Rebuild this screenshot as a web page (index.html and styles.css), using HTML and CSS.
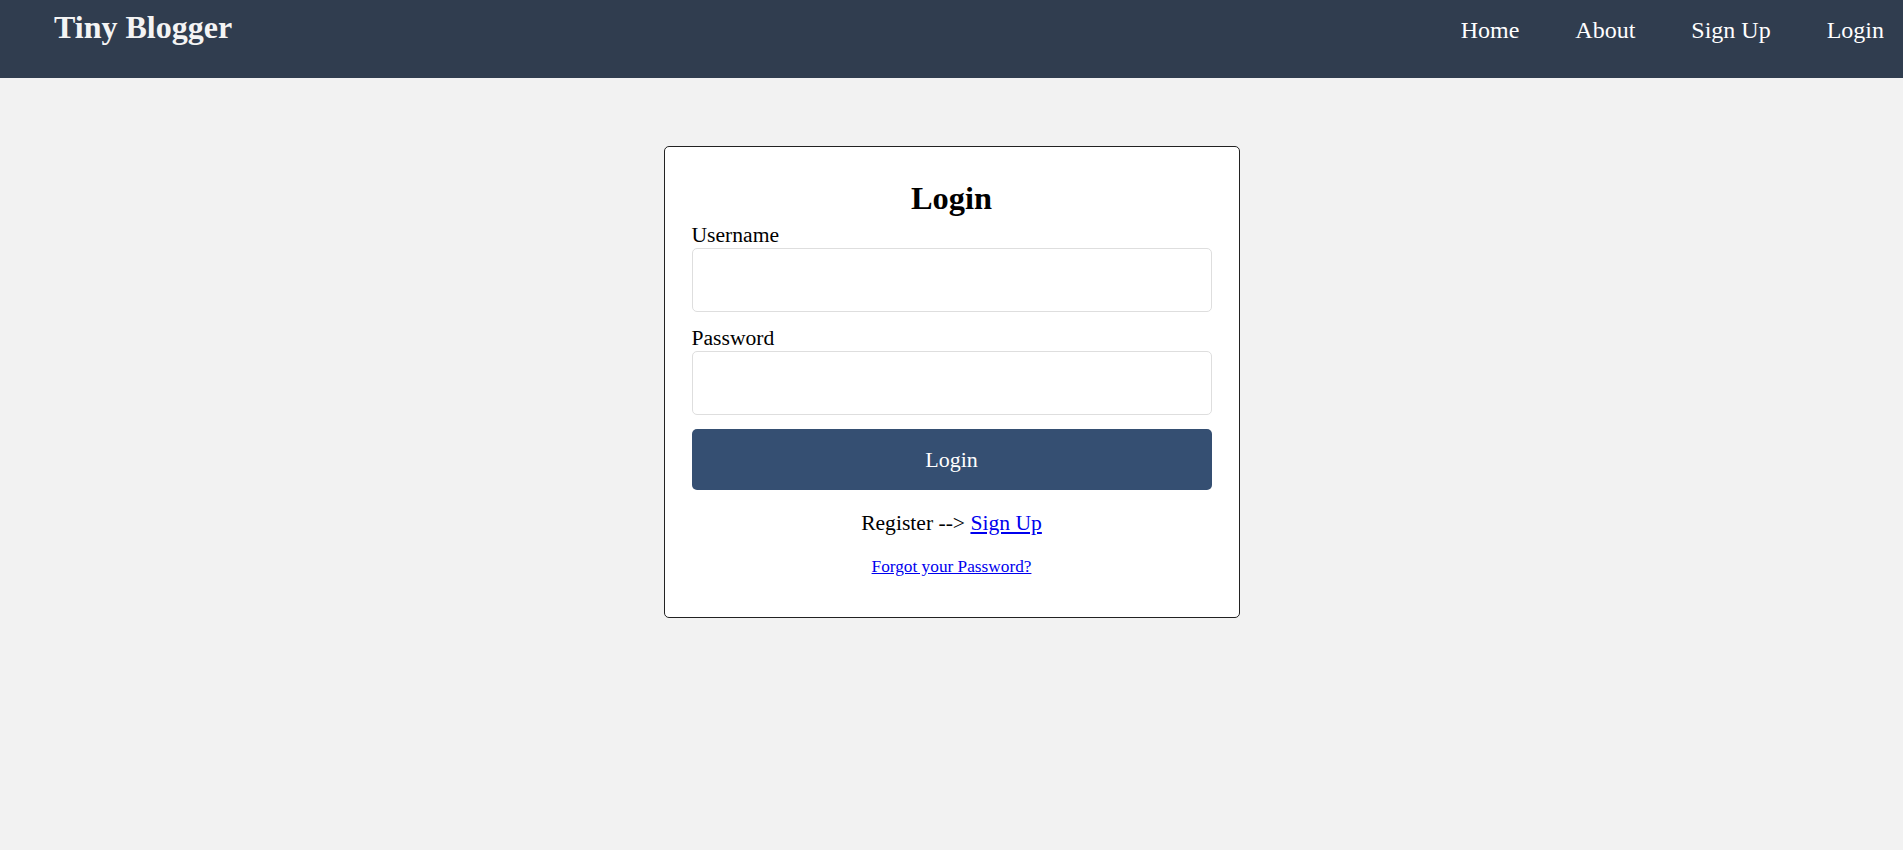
FILE: index.html
```html
<!DOCTYPE html>
<html lang="en">
<head>
<meta charset="utf-8">
<title>Tiny Blogger - Login</title>
<link rel="stylesheet" href="styles.css">
</head>
<body>
<header class="topbar">
  <h1 class="brand">Tiny Blogger</h1>
  <nav class="nav">
    <a class="nav-link" href="#">Home</a>
    <a class="nav-link" href="#">About</a>
    <a class="nav-link" href="#">Sign Up</a>
    <a class="nav-link" href="#">Login</a>
  </nav>
</header>
<main class="page">
  <form class="card">
    <h2 class="card-title">Login</h2>
    <label class="field-label" for="username">Username</label>
    <input class="field-input" id="username" type="text">
    <label class="field-label field-label-next" for="password">Password</label>
    <input class="field-input" id="password" type="password">
    <button class="submit" type="button">Login</button>
    <p class="register">Register --&gt; <a href="#">Sign Up</a></p>
    <p class="forgot"><a href="#">Forgot your Password?</a></p>
  </form>
</main>
</body>
</html>
```

FILE: styles.css
```css
html, body {
  margin: 0;
  padding: 0;
}
body {
  background: #f2f2f2;
  font-family: "Liberation Serif", "Times New Roman", serif;
  color: #000;
}
.topbar {
  height: 78px;
  background: #303d4f;
  display: flex;
  justify-content: space-between;
  align-items: flex-start;
  padding: 0 19px 0 54px;
  box-sizing: border-box;
}
.brand {
  margin: 9px 0 0;
  font-size: 32px;
  font-weight: bold;
  color: #f4f4f4;
  line-height: normal;
}
.nav {
  display: flex;
  gap: 56px;
  margin-top: 17px;
}
.nav-link {
  color: #fff;
  text-decoration: none;
  font-size: 24px;
  line-height: normal;
}
.page {
  display: flex;
  justify-content: center;
  padding-top: 68px;
}
.card {
  width: 576px;
  box-sizing: border-box;
  background: #fff;
  border: 1px solid #222;
  border-radius: 5px;
  padding: 33px 27px 40px;
  display: flex;
  flex-direction: column;
  font-size: 21.6px;
}
.card-title {
  margin: 0;
  font-size: 32.4px;
  font-weight: bold;
  text-align: center;
  line-height: normal;
}
.field-label {
  display: block;
  margin-top: 6px;
  line-height: normal;
}
.field-label-next {
  margin-top: 14px;
}
.field-input {
  display: block;
  width: 100%;
  height: 64px;
  box-sizing: border-box;
  margin-top: 0;
  border: 1px solid #dedede;
  border-radius: 5px;
  background: #fff;
  font-size: 20px;
  padding: 0 12px;
}
.submit {
  margin-top: 14px;
  height: 61px;
  width: 100%;
  border: none;
  border-radius: 5px;
  background: #354f72;
  color: #fff;
  font-family: "Liberation Serif", "Times New Roman", serif;
  font-size: 22px;
  cursor: pointer;
}
.register {
  margin: 21px 0 0;
  text-align: center;
  line-height: normal;
}
.register a, .forgot a {
  color: #0000ee;
}
.forgot {
  margin: 21px 0 0;
  text-align: center;
  font-size: 17.28px;
  line-height: normal;
}
```
